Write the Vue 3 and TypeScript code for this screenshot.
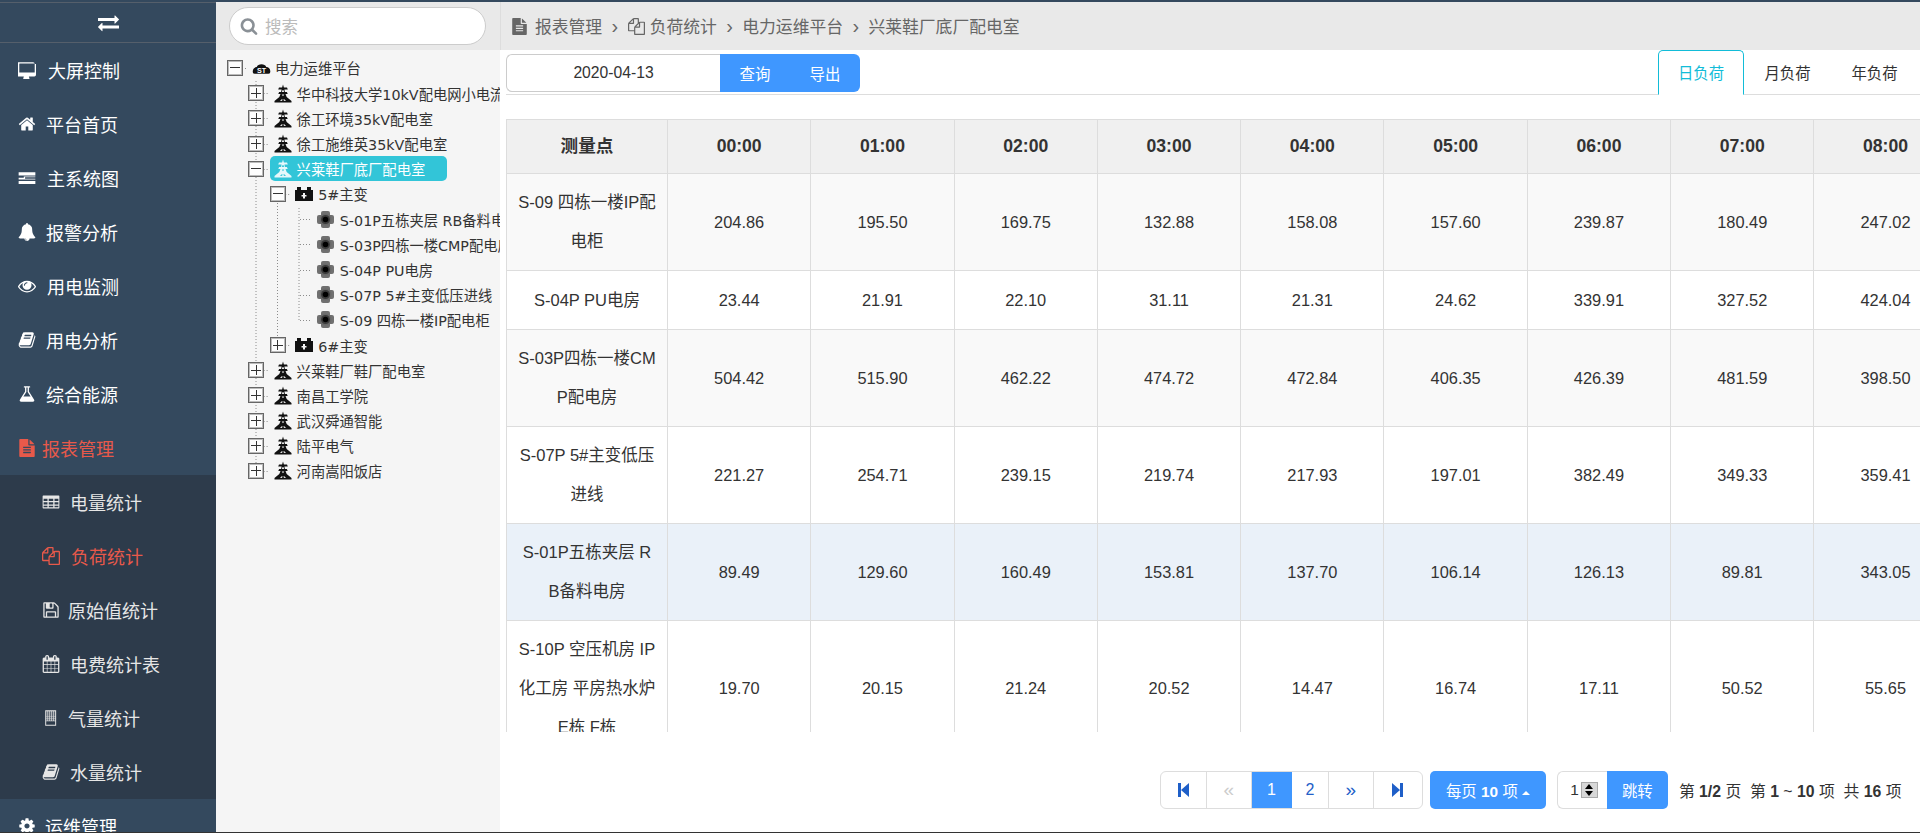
<template>
  <div class="app">
    <aside class="sidebar">
      <div class="toggle">
        <svg class="toggle-icon" viewBox="0 0 1792 1792"><path :d="icons.exchange" /></svg>
      </div>
      <template v-for="item in menu" :key="item.label">
        <div class="nav-item" :class="{ active: item.active }">
          <span class="nav-icon" :style="{ width: item.w + 'px' }">
            <svg viewBox="0 0 1792 1792"><path :d="icons[item.icon]" fill-rule="evenodd" /></svg>
          </span>
          <span>{{ item.label }}</span>
        </div>
        <div v-if="item.children" class="sub-nav">
          <div
            v-for="sub in item.children"
            :key="sub.label"
            class="sub-item"
            :class="{ active: sub.active }"
          >
            <span class="nav-icon" :style="{ width: sub.w + 'px' }">
              <svg viewBox="0 0 1792 1792"><path :d="icons[sub.icon]" fill-rule="evenodd" /></svg>
            </span>
            <span>{{ sub.label }}</span>
          </div>
        </div>
      </template>
    </aside>

    <section class="tree-pane">
      <div class="search-bar">
        <div class="search-box">
          <svg class="search-icon" viewBox="0 0 1792 1792"><path :d="icons.search" /></svg>
          <span class="search-text">搜索</span>
        </div>
      </div>
      <div class="tree">
        <svg class="guides" width="284" height="460">
          <line x1="40" y1="31" x2="40" y2="414" />
          <line x1="61.5" y1="153" x2="61.5" y2="290" />
          <line x1="83" y1="158" x2="83" y2="272" />
          <line
            v-for="g in guides"
            :key="g.y"
            :x1="g.x1"
            :x2="g.x2"
            :y1="g.y"
            :y2="g.y"
          />
        </svg>
        <div
          v-for="row in rows"
          :key="row.label"
          class="tree-row"
          :style="{ paddingLeft: 10.5 + row.level * 21.6 + 'px' }"
        >
          <span v-if="row.state" class="expander" :class="row.state"></span>
          <span v-else class="expander-gap"></span>
          <span class="node" :class="{ selected: row.selected }">
            <span class="node-icon">
              <svg v-if="row.icon === 'cloud'" width="19" height="14" viewBox="0 0 20 14">
                <path d="M1 12C0 8 3 6 5 6 6 2 14 2 15 6c3 0 5 3 4 6q0 1-2 1H3q-2 0-2-1z" />
                <text x="10" y="12" class="cloud-text">ST</text>
              </svg>
              <svg v-else-if="row.icon === 'tower'" width="18" height="19" viewBox="0 0 18 18">
                <path
                  fill-rule="evenodd"
                  d="M9 0l.9 3H13l.8 2h-3.400l.5 2.400h2l.8 2h-2.200l1.200 3 4.800 4.100V18H.5v-1.500l4.800-4.100 1.200-3H4.300l.8-2h2l.5-2.400H4.200l.8-2h3.100zM8.300 5.800h1.400l.3 1.700H8zM7.700 10h2.600L9 11.800zM6 16.600l2-2.200.7 1-1.200 1.200zM12 16.600l-2-2.200-.7 1 1.200 1.200z"
                />
              </svg>
              <svg v-else-if="row.icon === 'battery'" width="18" height="14" viewBox="0 0 18 14">
                <path
                  fill-rule="evenodd"
                  d="M2 0h4v3h6V0h4v3h2v11H0V3h2zM8 6v2H6.500v1.500H8v2h2v-2h1.500V8H10V6z"
                />
              </svg>
              <svg v-else width="17" height="17" viewBox="0 0 17 17">
                <rect x="4" y="0" width="9" height="17" rx="2" fill="#707070" />
                <rect x="0" y="4" width="17" height="9" rx="2" fill="#707070" />
                <circle cx="8.500" cy="8.500" r="6" fill="#686868" />
                <circle cx="8.500" cy="8.500" r="4.500" fill="#3a3a3a" />
                <circle cx="8.500" cy="8.500" r="2.800" fill="#000" />
              </svg>
            </span>
            <span>{{ row.label }}</span>
          </span>
        </div>
      </div>
    </section>

    <main class="content">
      <div class="crumbs">
        <svg class="crumb-icon file" viewBox="0 0 1792 1792"><path :d="icons.file" /></svg>
        <span>报表管理</span>
        <span class="crumb-sep">›</span>
        <svg class="crumb-icon" viewBox="0 0 1792 1792"><path :d="icons.copy" /></svg>
        <span>负荷统计</span>
        <span class="crumb-sep">›</span>
        <span>电力运维平台</span>
        <span class="crumb-sep">›</span>
        <span>兴莱鞋厂底厂配电室</span>
      </div>

      <div class="toolbar">
        <div class="date-input">2020-04-13</div>
        <div class="btn-group">
          <button class="btn">查询</button>
          <button class="btn">导出</button>
        </div>
        <div class="tabs">
          <div
            v-for="(tab, index) in tabs"
            :key="tab"
            class="tab"
            :class="{ active: index === 0 }"
          >
            {{ tab }}
          </div>
        </div>
      </div>

      <div class="table-wrap">
        <table class="data-table">
          <colgroup>
            <col class="col-name" />
            <col v-for="h in hours" :key="h" class="col-hour" />
          </colgroup>
          <thead>
            <tr>
              <th>测量点</th>
              <th v-for="h in hours" :key="h">{{ h }}</th>
            </tr>
          </thead>
          <tbody>
            <tr
              v-for="(r, index) in tableRows"
              :key="r.name"
              :class="{ striped: index === 0 || index === 2, hovered: index === 4 }"
            >
              <td class="name">{{ r.name }}</td>
              <td v-for="(v, i) in r.values" :key="i">{{ v }}</td>
            </tr>
          </tbody>
        </table>
      </div>

      <div class="pager-row">
        <div class="pager">
          <a class="page p1">
            <svg width="11" height="14" viewBox="0 0 11 14"><path d="M0 0h3v14H0zM3 7l8-7v14z" /></svg>
          </a>
          <a class="page p2 disabled">«</a>
          <a class="page p3 current">1</a>
          <a class="page p4">2</a>
          <a class="page p5">»</a>
          <a class="page p6">
            <svg width="11" height="14" viewBox="0 0 11 14"><path d="M8 0h3v14H8zM8 7L0 0v14z" /></svg>
          </a>
        </div>
        <button class="per-page">每页 <b>10</b> 项<i class="caret"></i></button>
        <div class="jump">
          <div class="jump-input">
            <span>1</span>
            <span class="spinner"><i class="up"></i><i class="down"></i></span>
          </div>
          <button class="jump-btn">跳转</button>
        </div>
        <div class="summary">
          第 <b>1/2</b> 页 &nbsp;第 <b>1</b> ~ <b>10</b> 项 &nbsp;共 <b>16</b> 项
        </div>
      </div>
    </main>
  </div>
</template>

<script setup lang="ts">
interface MenuItem {
  label: string
  icon: string
  w: number
  active?: boolean
  children?: MenuItem[]
}

interface TreeRow {
  label: string
  level: number
  icon: 'cloud' | 'tower' | 'battery' | 'node'
  state?: 'open' | 'closed'
  selected?: boolean
}

function buildingPath() {
  let d = 'M320 128h1088v1536H320z'
  for (let y = 240; y < 1150; y += 192) {
    for (let x = 416; x < 1250; x += 192) {
      d += `M${x} ${y}h128v128h-128z`
    }
  }
  return d + 'M416 1216h896v352H416z'
}

const icons: Record<string, string> = {
  exchange:
    'M1792 1184v192q0 13-9.500 22.500t-22.500 9.500h-1376v192q0 13-9.500 22.500t-22.500 9.500q-12 0-24-10l-319-320q-9-9-9-22 0-14 9-23l320-320q9-9 23-9 13 0 22.500 9.500t9.500 22.500v192h1376q13 0 22.500 9.500t9.500 22.500zm0-544q0 14-9 23l-320 320q-9 9-23 9-13 0-22.500-9.500t-9.500-22.500v-192h-1376q-13 0-22.500-9.500t-9.500-22.500v-192q0-13 9.500-22.500t22.500-9.500h1376v-192q0-14 9-23t23-9q12 0 24 10l319 319q9 9 9 23z',
  desktop:
    'M1664 1120v-832q0-13-9.500-22.500t-22.500-9.500h-1472q-13 0-22.500 9.500t-9.500 22.500v832q0 13 9.500 22.500t22.500 9.500h1472q13 0 22.500-9.500t9.500-22.500zm128-832v1088q0 66-47 113t-113 47h-544q0 37 16 77.500t32 71 16 43.500q0 26-19 45t-45 19h-512q-26 0-45-19t-19-45q0-14 16-44t32-70 16-78h-544q-66 0-113-47t-47-113v-1088q0-66 47-113t113-47h1472q66 0 113 47t47 113z',
  home:
    'M1472 992v480q0 26-19 45t-45 19h-384v-384h-256v384h-384q-26 0-45-19t-19-45v-480q0-1 .5-3t.5-3l575-474 575 474q1 2 1 6zm223-69l-62 74q-8 9-21 11h-3q-13 0-21-7l-692-577-692 577q-12 8-24 7-13-2-21-11l-62-74q-8-10-7-23.500t11-21.500l719-599q32-26 76-26t76 26l244 204v-195q0-14 9-23t23-9h192q14 0 23 9t9 23v408l219 182q10 8 11 21.500t-7 23.500z',
  tasks: 'M64 320h1664v320H64zM64 736h1664v96H704v128h1024v96H64V880h512V736zM64 1184h1664v320H64zM64 1280',
  bell:
    'M912 1696q0-16-16-16-59 0-101.500-42.500t-42.500-101.500q0-16-16-16t-16 16q0 73 51.500 124.500t124.500 51.500q16 0 16-16zm816-288q0 52-38 90t-90 38h-448q0 106-75 181t-181 75-181-75-75-181h-448q-52 0-90-38t-38-90q50-42 91-88t85-119.500 74.500-158.500 50-206 19.500-260q0-152 117-282.500t307-158.500q-8-19-8-39 0-40 28-68t68-28 68 28 28 68q0 20-8 39 190 28 307 158.500t117 282.500q0 139 19.500 260t50 206 74.500 158.500 85 119.500 91 88z',
  eye:
    'M1664 960q-152-236-381-353 61 104 61 225 0 185-131.500 316.500t-316.500 131.500-316.500-131.500-131.500-316.500q0-121 61-225-229 117-381 353 133 205 333.500 326.500t434.500 121.500 434.500-121.500 333.500-326.500zm-720-384q0-20-14-34t-34-14q-125 0-214.500 89.500t-89.500 214.500q0 20 14 34t34 14 34-14 14-34q0-86 61-147t147-61q20 0 34-14t14-34zm848 384q0 34-20 69-140 230-376.500 368.500t-499.500 138.500-499.500-139-376.500-368q-20-35-20-69t20-69q140-229 376.500-368t499.500-139 499.500 139 376.500 368q20 35 20 69z',
  book:
    'M1703 478q40 57 18 129l-275 906q-19 64-76.500 107.500t-122.500 43.500h-923q-77 0-148.500-53.500t-99.500-131.500q-24-67-2-127 0-4 3-27t4-37q1-8-3-21.500t-3-19.500q2-11 8-21t16.500-23.500 16.500-23.500q23-38 45-91.500t30-91.500q3-10 .5-30t-.5-28q3-11 17-28t17-23q21-36 42-92t25-90q1-9-2.500-32t.5-28q4-13 22-30.500t22-22.500q19-26 42.500-84.500t27.500-96.500q1-8-3-25.500t-2-26.500q2-8 9-18t18-23 17-21q8-12 16.500-30.500t15-35 16-36 19.500-32 26.500-23.500 36-11.500 47.500 5.500l-1 3q38-9 51-9h761q74 0 114 56t18 130l-274 906q-36 119-71.500 153.500t-128.500 34.500h-869q-27 0-38 15-11 16-1 43 24 70 144 70h923q29 0 56-15.500t35-41.500l300-987q7-22 5-57 38 15 59 43zm-1064 2q-4 13 2 22.500t20 9.500h608q13 0 25.500-9.500t16.500-22.500l21-64q4-13-2-22.500t-20-9.500h-608q-13 0-25.500 9.500t-16.500 22.500zm-83 256q-4 13 2 22.500t20 9.500h608q13 0 25.500-9.500t16.500-22.500l21-64q4-13-2-22.500t-20-9.500h-608q-13 0-25.500 9.500t-16.500 22.500z',
  flask:
    'M1591 1448q56 89 21.500 152.500t-140.500 63.500h-1152q-106 0-140.500-63.500t21.500-152.500l503-793v-399h-64q-26 0-45-19t-19-45 19-45 45-19h512q26 0 45 19t19 45-19 45-45 19h-64v399zm-779-725l-272 429h712l-272-429-20-31v-436h-128v436z',
  file:
    'M1596 476q14 14 28 36h-472v-472q22 14 36 28zm-476 164h544v1056q0 40-28 68t-68 28h-1344q-40 0-68-28t-28-68v-1600q0-40 28-68t68-28h800v544q0 40 28 68t68 28zm160 736v-64q0-14-9-23t-23-9h-704q-14 0-23 9t-9 23v64q0 14 9 23t23 9h704q14 0 23-9t9-23zm0-256v-64q0-14-9-23t-23-9h-704q-14 0-23 9t-9 23v64q0 14 9 23t23 9h704q14 0 23-9t9-23zm0-256v-64q0-14-9-23t-23-9h-704q-14 0-23 9t-9 23v64q0 14 9 23t23 9h704q14 0 23-9t9-23z',
  table:
    'M128 256h1536q66 0 66 66v1150q0 66-66 66H128q-66 0-66-66V322q0-66 66-66zm32 320v224h384V576zm512 0v224h448V576zm576 0v224h384V576zM160 928v224h384V928zm512 0v224h448V928zm576 0v224h384V928zM160 1280v128h384v-128zm512 0v128h448v-128zm576 0v128h384v-128z',
  copy:
    'M1696 384q40 0 68 28t28 68v1216q0 40-28 68t-68 28h-960q-40 0-68-28t-28-68v-288h-544q-40 0-68-28t-28-68v-672q0-40 20-88t48-76l408-408q28-28 76-48t88-20h416q40 0 68 28t28 68v328q68-40 128-40h416zm-544 213l-299 299h299v-299zm-640-384l-299 299h299v-299zm196 647l316-316v-416h-384v416q0 40-28 68t-68 28h-416v640h512v-256q0-40 20-88t48-76zm956 804v-1152h-384v416q0 40-28 68t-68 28h-416v640h896z',
  save:
    'M512 1536h768v-384h-768v384zm896 0h128v-896q0-14-10-38.500t-20-34.500l-281-281q-10-10-34-20t-39-10v416q0 40-28 68t-68 28h-576q-40 0-68-28t-28-68v-416h-128v1280h128v-416q0-40 28-68t68-28h832q40 0 68 28t28 68v416zm-384-928v-320q0-13-9.500-22.500t-22.500-9.500h-192q-13 0-22.500 9.500t-9.500 22.500v320q0 13 9.500 22.500t22.500 9.500h192q13 0 22.500-9.500t9.500-22.500zm640 32v928q0 40-28 68t-68 28h-1344q-40 0-68-28t-28-68v-1344q0-40 28-68t68-28h928q40 0 88 20t76 48l280 280q28 28 48 76t20 88z',
  calendar:
    'M192 1664h288v-288h-288v288zm352 0h320v-288h-320v288zm-352-352h288v-320h-288v320zm352 0h320v-320h-320v320zm-352-384h288v-288h-288v288zm736 736h320v-288h-320v288zm-384-736h320v-288h-320v288zm768 736h288v-288h-288v288zm-384-352h320v-320h-320v320zm-352-864v-288q0-13-9.500-22.500t-22.500-9.500h-64q-13 0-22.500 9.500t-9.500 22.500v288q0 13 9.500 22.500t22.500 9.500h64q13 0 22.500-9.500t9.500-22.500zm736 864h288v-320h-288v320zm-384-384h320v-288h-320v288zm384 0h288v-288h-288v288zm32-480v-288q0-13-9.500-22.500t-22.500-9.500h-64q-13 0-22.500 9.500t-9.500 22.500v288q0 13 9.500 22.500t22.500 9.500h64q13 0 22.500-9.500t9.500-22.500zm384-64v1280q0 52-38 90t-90 38h-1408q-52 0-90-38t-38-90v-1280q0-52 38-90t90-38h128v-96q0-66 47-113t113-47h64q66 0 113 47t47 113v96h384v-96q0-66 47-113t113-47h64q66 0 113 47t47 113v96h128q52 0 90 38t38 90z',
  building: buildingPath(),
  cog:
    'M1152 896q0-106-75-181t-181-75-181 75-75 181 75 181 181 75 181-75 75-181zm512-109v222q0 12-8 23t-20 13l-185 28q-19 54-39 91 35 50 107 138 10 12 10 25t-9 23q-27 37-99 108t-94 71q-12 0-26-9l-138-108q-44 23-91 38-16 136-29 186-7 28-36 28h-222q-14 0-24.500-8.500t-11.500-21.500l-28-184q-49-16-90-37l-141 107q-10 9-25 9-14 0-25-11-126-114-165-168-7-10-7-23 0-12 8-23 15-21 51-66.500t54-70.500q-27-50-41-99l-183-27q-13-2-21-12.500t-8-23.500v-222q0-12 8-23t19-13l186-28q14-46 39-92-40-57-107-138-10-12-10-24 0-10 9-23 26-36 98.500-107.500t94.500-71.500q13 0 26 10l138 107q44-23 91-38 16-136 29-186 7-28 36-28h222q14 0 24.500 8.500t11.500 21.500l28 184q49 16 90 37l142-107q9-9 24-9 13 0 25 10 129 119 165 170 7 8 7 22 0 12-8 23-15 21-51 66.500t-54 70.500q26 50 41 98l183 28q13 2 21 12.500t8 23.500z',
  search:
    'M1216 832q0-185-131.500-316.500t-316.500-131.500-316.500 131.500-131.500 316.500 131.500 316.500 316.500 131.500 316.500-131.500 131.500-316.500zm512 832q0 52-38 90t-90 38q-54 0-90-38l-343-342q-179 124-399 124-143 0-273.500-55.500t-225-150-150-225-55.500-273.500 55.500-273.500 150-225 225-150 273.500-55.500 273.500 55.500 225 150 150 225 55.500 273.500q0 220-124 399l343 343q37 37 37 90z',
}

const menu: MenuItem[] = [
  { label: '大屏控制', icon: 'desktop', w: 30 },
  { label: '平台首页', icon: 'home', w: 28 },
  { label: '主系统图', icon: 'tasks', w: 29 },
  { label: '报警分析', icon: 'bell', w: 28 },
  { label: '用电监测', icon: 'eye', w: 29 },
  { label: '用电分析', icon: 'book', w: 28 },
  { label: '综合能源', icon: 'flask', w: 28 },
  {
    label: '报表管理',
    icon: 'file',
    w: 24,
    active: true,
    children: [
      { label: '电量统计', icon: 'table', w: 28 },
      { label: '负荷统计', icon: 'copy', w: 29, active: true },
      { label: '原始值统计', icon: 'save', w: 26 },
      { label: '电费统计表', icon: 'calendar', w: 28 },
      { label: '气量统计', icon: 'building', w: 26 },
      { label: '水量统计', icon: 'book', w: 28 },
    ],
  },
  { label: '运维管理', icon: 'cog', w: 27 },
]

const rows: TreeRow[] = [
  { label: '电力运维平台', level: 0, icon: 'cloud', state: 'open' },
  { label: '华中科技大学10kV配电网小电流接地', level: 1, icon: 'tower', state: 'closed' },
  { label: '徐工环境35kV配电室', level: 1, icon: 'tower', state: 'closed' },
  { label: '徐工施维英35kV配电室', level: 1, icon: 'tower', state: 'closed' },
  { label: '兴莱鞋厂底厂配电室', level: 1, icon: 'tower', state: 'open', selected: true },
  { label: '5#主变', level: 2, icon: 'battery', state: 'open' },
  { label: 'S-01P五栋夹层 RB备料电房', level: 3, icon: 'node' },
  { label: 'S-03P四栋一楼CMP配电房', level: 3, icon: 'node' },
  { label: 'S-04P PU电房', level: 3, icon: 'node' },
  { label: 'S-07P 5#主变低压进线', level: 3, icon: 'node' },
  { label: 'S-09 四栋一楼IP配电柜', level: 3, icon: 'node' },
  { label: '6#主变', level: 2, icon: 'battery', state: 'closed' },
  { label: '兴莱鞋厂鞋厂配电室', level: 1, icon: 'tower', state: 'closed' },
  { label: '南昌工学院', level: 1, icon: 'tower', state: 'closed' },
  { label: '武汉舜通智能', level: 1, icon: 'tower', state: 'closed' },
  { label: '陆平电气', level: 1, icon: 'tower', state: 'closed' },
  { label: '河南嵩阳饭店', level: 1, icon: 'tower', state: 'closed' },
]

const ROW_H = 25.2
const guides = rows.map((row, i) => {
  const y = Math.round(5.4 + ROW_H * i + ROW_H / 2) + 0.5
  if (row.level === 3) return { y, x1: 84, x2: 96 }
  const start = 26 + row.level * 21.6
  return { y, x1: start, x2: start + 6 }
})

const tabs = ['日负荷', '月负荷', '年负荷']
const hours = ['00:00', '01:00', '02:00', '03:00', '04:00', '05:00', '06:00', '07:00', '08:00']

const tableRows = [
  {
    name: 'S-09 四栋一楼IP配电柜',
    values: ['204.86', '195.50', '169.75', '132.88', '158.08', '157.60', '239.87', '180.49', '247.02'],
  },
  {
    name: 'S-04P PU电房',
    values: ['23.44', '21.91', '22.10', '31.11', '21.31', '24.62', '339.91', '327.52', '424.04'],
  },
  {
    name: 'S-03P四栋一楼CMP配电房',
    values: ['504.42', '515.90', '462.22', '474.72', '472.84', '406.35', '426.39', '481.59', '398.50'],
  },
  {
    name: 'S-07P 5#主变低压进线',
    values: ['221.27', '254.71', '239.15', '219.74', '217.93', '197.01', '382.49', '349.33', '359.41'],
  },
  {
    name: 'S-01P五栋夹层 RB备料电房',
    values: ['89.49', '129.60', '160.49', '153.81', '137.70', '106.14', '126.13', '89.81', '343.05'],
  },
  {
    name: 'S-10P 空压机房 IP化工房 平房热水炉E栋 F栋',
    values: ['19.70', '20.15', '21.24', '20.52', '14.47', '16.74', '17.11', '50.52', '55.65'],
  },
]
</script>

<style>
html,
body {
  margin: 0;
  background: #fff;
}
</style>

<style scoped>
.app {
  display: flex;
  width: 1920px;
  height: 833px;
  box-sizing: border-box;
  border-top: 2px solid #34495e;
  border-bottom: 1px solid #333;
  overflow: hidden;
  font-family: 'Liberation Sans', 'Noto Sans CJK SC', sans-serif;
  color: #333;
}

.sidebar {
  flex: 0 0 216px;
  background: #34495e;
  color: #fff;
  font-size: 18px;
  overflow: hidden;
}

.toggle {
  display: flex;
  justify-content: center;
  align-items: center;
  height: 41px;
  border-top: 1px solid #555f6b;
  border-bottom: 1px solid #555f6b;
  box-sizing: border-box;
}

.toggle-icon {
  width: 21px;
  height: 21px;
  fill: #fff;
}

.nav-item,
.sub-item {
  display: flex;
  align-items: center;
  height: 54px;
  padding-left: 18px;
}

.sub-nav {
  background: #2d3b4b;
  color: #e6e6e6;
}

.sub-item {
  padding-left: 42px;
}

.nav-item.active,
.sub-item.active {
  color: #e8594a;
}

.nav-icon {
  flex: none;
  display: block;
  height: 18px;
}

.nav-icon svg {
  display: block;
  width: 18px;
  height: 18px;
  fill: currentColor;
}

.tree-pane {
  flex: 0 0 284px;
  background: #f5f5f5;
  overflow: hidden;
}

.search-bar {
  display: flex;
  align-items: center;
  height: 48px;
  padding: 0 14px 0 13px;
  background: #e9e9e9;
}

.search-box {
  display: flex;
  align-items: center;
  flex: 1;
  height: 38px;
  box-sizing: border-box;
  padding-left: 10px;
  background: #fff;
  border: 1px solid #ccc;
  border-radius: 19px;
}

.search-icon {
  width: 18px;
  height: 18px;
  fill: #8a9096;
}

.search-text {
  margin-left: 7px;
  font-size: 16.5px;
  color: #bbb;
}

.tree {
  position: relative;
  padding-top: 5.4px;
  font-family: 'DejaVu Sans', 'Noto Sans CJK SC', sans-serif;
  font-size: 14.3px;
  white-space: nowrap;
}

.guides {
  position: absolute;
  top: 0;
  left: 0;
}

.guides line {
  stroke: #8c8c8c;
  stroke-width: 1;
  stroke-dasharray: 1 2;
}

.tree-row {
  position: relative;
  display: flex;
  align-items: center;
  height: 25.2px;
}

.expander,
.expander-gap {
  flex: none;
  width: 16px;
  height: 16px;
  box-sizing: border-box;
}

.expander {
  position: relative;
  background: #fdfdfd;
  border: 1px solid #666;
  box-shadow: inset 0 0 0 1px #bbb;
}

.expander::before,
.expander.closed::after {
  content: '';
  position: absolute;
  background: #333;
}

.expander::before {
  left: 2px;
  right: 2px;
  top: 6.500px;
  height: 1px;
}

.expander.closed::after {
  top: 2px;
  bottom: 2px;
  left: 6.500px;
  width: 1px;
}

.node {
  display: flex;
  align-items: center;
  height: 25px;
  margin-left: 5.5px;
  padding: 0 22px 0 4px;
  border-radius: 5px;
}

.node.selected {
  background: #32c5d8;
  color: #fff;
}

.node-icon {
  display: flex;
  flex: none;
  align-items: center;
  width: 23px;
  fill: #111;
}

.node.selected .node-icon {
  fill: #e6f8fb;
}

.cloud-text {
  font-family: 'Liberation Sans', sans-serif;
  font-size: 7.5px;
  font-weight: 700;
  fill: #fff;
  text-anchor: middle;
}

.content {
  flex: 1;
  min-width: 0;
}

.crumbs {
  display: flex;
  align-items: center;
  height: 48px;
  box-sizing: border-box;
  padding-left: 10px;
  background: #e9e9e9;
  border-left: 1px solid #ddd;
  font-size: 16.8px;
  color: #666;
}

.crumb-icon {
  width: 17px;
  height: 17px;
  margin-right: 5px;
  fill: #666;
}

.crumb-icon.file {
  margin-right: 7px;
}

.crumb-sep {
  width: 25.5px;
  font-size: 20px;
  text-align: center;
}

.toolbar {
  display: flex;
  align-items: flex-start;
  height: 45px;
  box-sizing: border-box;
  margin-left: 6px;
  padding-top: 4px;
  border-bottom: 1px solid #ddd;
  font-size: 15.4px;
}

.date-input {
  width: 214px;
  height: 38px;
  box-sizing: border-box;
  background: #fff;
  border: 1px solid #ccc;
  border-right: none;
  border-radius: 6px 0 0 6px;
  font-size: 15.7px;
  line-height: 36px;
  text-align: center;
}

.btn-group {
  display: flex;
  height: 38px;
  background: #3f97ff;
  border-radius: 0 6px 6px 0;
  overflow: hidden;
}

.btn {
  width: 70px;
  padding: 0;
  background: none;
  border: none;
  color: #fff;
  font: inherit;
}

.tabs {
  display: flex;
  margin-left: auto;
  margin-top: -4px;
  padding-right: 2px;
}

.tab {
  width: 87px;
  height: 45px;
  box-sizing: border-box;
  border: 1px solid transparent;
  line-height: 45px;
  text-align: center;
}

.tab.active {
  width: 86px;
  background: #fff;
  border-color: #12bcd8;
  border-bottom-color: #fff;
  border-radius: 5px 5px 0 0;
  color: #12bcd8;
}

.table-wrap {
  height: 613px;
  margin: 24px 0 0 6px;
  overflow: hidden;
}

.data-table {
  width: 1450.7px;
  table-layout: fixed;
  border-collapse: collapse;
  font-size: 16.4px;
  text-align: center;
}

.col-name {
  width: 161px;
}

.col-hour {
  width: 143.3px;
}

.data-table th,
.data-table td {
  border: 1px solid #ddd;
  padding: 9px 10px;
  line-height: 39px;
}

.data-table td {
  height: 40px;
}

.data-table th {
  padding: 6.5px 10px 7.5px;
  background: #f0f0f0;
  font-size: 17.6px;
}

.data-table td.name {
  padding: 9px 11px;
  font-size: 16.5px;
  word-break: break-all;
}

.data-table tr.striped td {
  background: #f9f9f9;
}

.data-table tr.hovered td {
  background: #eaf1f9;
}

.pager-row {
  display: flex;
  align-items: center;
  justify-content: flex-end;
  height: 38px;
  margin-top: 39px;
  padding-right: 18.5px;
  font-size: 15.4px;
}

.pager {
  display: flex;
  height: 38px;
  box-sizing: border-box;
  border: 1px solid #ddd;
  border-radius: 6px;
  overflow: hidden;
}

.page {
  display: flex;
  align-items: center;
  justify-content: center;
  box-sizing: border-box;
  border-right: 1px solid #ddd;
  color: #2360c8;
  fill: #1f5fc8;
  font-size: 16px;
}

.page:last-child {
  border-right: none;
}

.p1 {
  width: 46px;
}

.p2 {
  width: 45px;
  font-size: 19px;
}

.p3 {
  width: 40px;
}

.p4 {
  width: 37px;
}

.p5 {
  width: 45px;
  font-size: 19px;
}

.p6 {
  width: 48px;
}

.page.disabled {
  color: #ccc;
}

.page.current {
  background: #3f97ff;
  border-right-color: #3f97ff;
  color: #fff;
  margin-top: -1px;
  margin-bottom: -1px;
}

.per-page,
.jump-btn {
  height: 38px;
  padding: 0;
  background: #3f97ff;
  border: none;
  color: #fff;
  font: inherit;
}

.per-page {
  width: 116px;
  margin-left: 7px;
  border-radius: 5px;
}

.caret {
  display: inline-block;
  margin-left: 4px;
  vertical-align: 2px;
  border-left: 4px solid transparent;
  border-right: 4px solid transparent;
  border-bottom: 4px solid #fff;
}

.jump {
  display: flex;
  margin-left: 11px;
}

.jump-input {
  display: flex;
  align-items: center;
  justify-content: flex-end;
  width: 50px;
  height: 38px;
  box-sizing: border-box;
  padding-right: 9px;
  border: 1px solid #ddd;
  border-right: none;
  border-radius: 6px 0 0 6px;
  gap: 2px;
}

.spinner {
  display: flex;
  flex-direction: column;
  width: 17px;
  height: 16px;
  background: #d8d8d8;
  border: 1px solid #aaa;
  box-sizing: border-box;
}

.spinner i {
  flex: 1;
  position: relative;
}

.spinner i::after {
  content: '';
  position: absolute;
  left: 3px;
  border-left: 4px solid transparent;
  border-right: 4px solid transparent;
}

.spinner .up::after {
  top: 1px;
  border-bottom: 5px solid #000;
}

.spinner .down::after {
  bottom: 1px;
  border-top: 5px solid #000;
}

.jump-btn {
  width: 61px;
  border-radius: 0 5px 5px 0;
}

.summary {
  margin-left: 11px;
  font-size: 15.8px;
  white-space: nowrap;
}
</style>
